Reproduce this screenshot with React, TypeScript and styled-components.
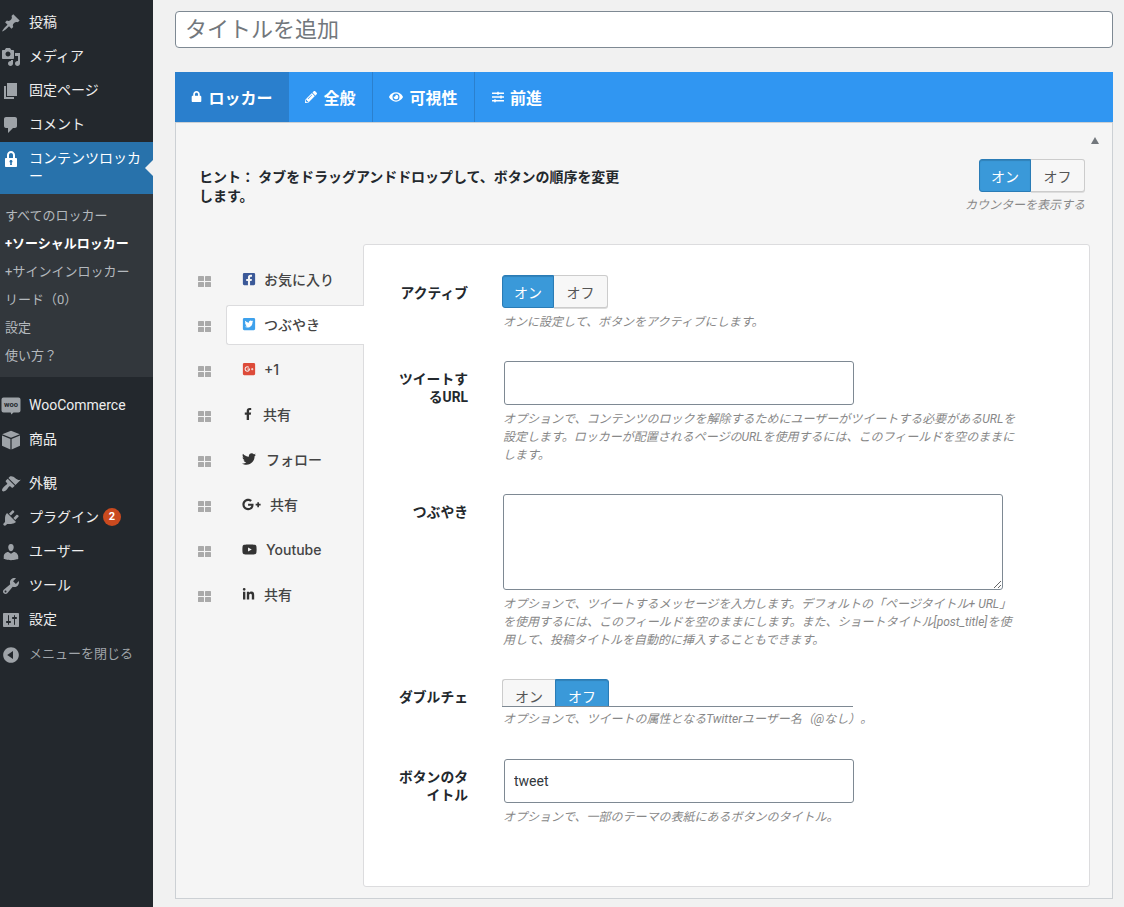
import React from "react";
import styled, { createGlobalStyle } from "styled-components";
import {
  FaFacebookSquare,
  FaTwitterSquare,
  FaGooglePlusSquare,
  FaFacebookF,
  FaTwitter,
  FaGooglePlusG,
  FaYoutube,
  FaLinkedinIn,
  FaLock,
  FaPencilAlt,
  FaEye,
  FaSlidersH,
} from "react-icons/fa";

const FONT = `Roboto, "Noto Sans CJK JP", "Noto Sans", sans-serif`;

const Global = createGlobalStyle`
  html, body { margin: 0; padding: 0; height: 907px; overflow: hidden; background: #f1f1f1; }
  body { font-family: ${FONT}; font-size: 13px; color: #444; text-spacing-trim: space-all; }
  * { box-sizing: border-box; }
`;

const Page = styled.div`
  display: flex;
  width: 1124px;
  height: 907px;
  overflow: hidden;
`;

const Sidebar = styled.nav`
  flex: 0 0 153px;
  background: #23282d;
  padding-top: 6px;
  display: flex;
  flex-direction: column;
`;

const MenuItem = styled.div<{ $active?: boolean; $muted?: boolean; $gapAfter?: number }>`
  position: relative;
  display: flex;
  align-items: flex-start;
  padding: ${(p) => (p.$active ? "7px 9px 9px 1px" : "7px 4px 7px 1px")};
  min-height: 34px;
  margin-bottom: ${(p) => p.$gapAfter ?? 0}px;
  background: ${(p) => (p.$active ? "#2872ab" : "transparent")};
  color: ${(p) => (p.$active ? "#fff" : p.$muted ? "#a0a5aa" : "#eee")};
  font-size: ${(p) => (p.$muted ? 13 : 14)}px;
  line-height: 18px;
`;

const MenuGlyph = styled.span<{ $active?: boolean }>`
  flex: 0 0 20px;
  width: 20px;
  height: 20px;
  color: ${(p) => (p.$active ? "#fff" : "#9ea3a8")};
  display: flex;
  align-items: center;
  justify-content: center;
`;

const MenuLabel = styled.span`
  margin-left: 8px;
  flex: 1;
  min-width: 0;
`;

const ActiveArrow = styled.span`
  position: absolute;
  right: 0;
  top: 18px;
  width: 0;
  height: 0;
  border-style: solid;
  border-width: 8px 8px 8px 0;
  border-color: transparent #f1f1f1 transparent transparent;
`;

const Badge = styled.span`
  display: inline-block;
  width: 18px;
  height: 18px;
  margin-left: 4px;
  border-radius: 50%;
  background: #ca4a1f;
  color: #fff;
  font-size: 11px;
  font-weight: 700;
  line-height: 18px;
  text-align: center;
  vertical-align: top;
`;

const Submenu = styled.div`
  background: #32373c;
  padding: 8px 0 7px 5px;
  margin-bottom: 12px;
`;

const SubItem = styled.div<{ $current?: boolean }>`
  height: 28px;
  line-height: 28px;
  font-size: 13px;
  white-space: nowrap;
  color: ${(p) => (p.$current ? "#fff" : "#b4b9be")};
  font-weight: ${(p) => (p.$current ? 700 : 400)};
`;

const Main = styled.main`
  flex: 1;
  min-width: 0;
  padding: 11px 11px 0 22px;
`;

const TitleInput = styled.input`
  display: block;
  width: 100%;
  height: 37px;
  padding: 0 9px;
  border: 1px solid #7e8993;
  border-radius: 4px;
  background: #fff;
  font-family: ${FONT};
  font-size: 22px;
  color: #32373c;
  outline: none;
  &::placeholder { color: #72777c; opacity: 1; }
`;

const TabBar = styled.div`
  margin-top: 24px;
  height: 50px;
  display: flex;
  background: #3096f2;
`;

const TabButton = styled.div<{ $active?: boolean; $divider?: boolean; $w: number }>`
  flex: 0 0 ${(p) => p.$w}px;
  display: flex;
  align-items: center;
  justify-content: center;
  gap: 6px;
  padding-bottom: 1px;
  background: ${(p) => (p.$active ? "#2a7fcd" : "transparent")};
  border-right: ${(p) => (p.$divider ? "1px solid #2b80ce" : "none")};
  color: #fff;
  font-size: 16px;
  font-weight: 700;
  white-space: nowrap;
`;

const PanelBody = styled.section`
  position: relative;
  border: 1px solid #ccd0d4;
  background: #f5f5f5;
  padding-bottom: 11px;
`;

const CollapseArrow = styled.span`
  position: absolute;
  top: 14px;
  right: 13px;
  width: 0;
  height: 0;
  border-style: solid;
  border-width: 0 4.5px 7px 4.5px;
  border-color: transparent transparent #72777c transparent;
`;

const HintRow = styled.div`
  height: 121px;
  padding: 36px 27px 0 23px;
  display: flex;
  justify-content: space-between;
  align-items: flex-start;
`;

const HintText = styled.p`
  margin: 9px 0 0;
  width: 428px;
  font-size: 14px;
  font-weight: 700;
  letter-spacing: -0.05px;
  line-height: 19px;
  color: #23282d;
`;

const CounterBox = styled.div`
  display: flex;
  flex-direction: column;
  align-items: flex-end;
`;

const CounterCaption = styled.div`
  margin-top: 5px;
  font-size: 12px;
  line-height: 16px;
  font-style: italic;
  color: #888;
`;

const ToggleGroup = styled.div`
  display: inline-flex;
`;

const ToggleBtn = styled.span<{ $on?: boolean; $side: "l" | "r"; $h: number }>`
  width: ${(p) => (p.$side === "l" ? (p.$on ? 52 : 53) : 54)}px;
  height: ${(p) => p.$h}px;
  display: flex;
  align-items: center;
  justify-content: center;
  font-size: 14px;
  background: ${(p) => (p.$on ? "#3a99d9" : "#f7f7f7")};
  color: ${(p) => (p.$on ? "#fff" : "#555")};
  border: 1px solid ${(p) => (p.$on ? "#2a7cb6" : "#ccc")};
  border-left-width: ${(p) => (p.$side === "r" && !p.$on ? 0 : 1)}px;
  border-right-width: ${(p) => (p.$side === "l" && !p.$on ? 0 : 1)}px;
  border-radius: ${(p) => (p.$side === "l" ? "3px 0 0 3px" : "0 3px 3px 0")};
  box-shadow: ${(p) => (p.$on ? "inset 0 1px 1px rgba(0,0,0,.15)" : "0 1px 0 #ddd")};
`;

const ClippedToggle = styled.div`
  width: 351px;
  height: 28px;
  margin-bottom: -2px;
  overflow: hidden;
  border-bottom: 1px solid #7e8993;
`;

const Columns = styled.div`
  display: flex;
  margin-right: 22px;
`;

const SocialList = styled.div`
  flex: 0 0 187px;
  padding-top: 14px;
`;

const SocialRow = styled.div`
  height: 45px;
  display: flex;
  align-items: center;
  padding-left: 22px;
`;

const DragHandle = styled.svg`
  flex: 0 0 13px;
  width: 13px;
  height: 11px;
  margin-top: 2px;
  fill: #aaa;
`;

const SocialTab = styled.div<{ $active?: boolean; $gap: number }>`
  position: relative;
  z-index: 1;
  margin: -2px ${(p) => (p.$active ? "-1px" : "0")} 0 15px;
  flex: 1;
  height: 40px;
  display: flex;
  align-items: center;
  gap: ${(p) => p.$gap}px;
  padding: 0 0 1px 15px;
  border: 1px solid ${(p) => (p.$active ? "#dcdcde" : "transparent")};
  border-right: none;
  border-radius: 3px 0 0 3px;
  background: ${(p) => (p.$active ? "#fff" : "transparent")};
  font-family: Inter, "Noto Sans CJK JP", sans-serif;
  font-size: 14px;
  font-weight: 500;
  color: #444;
  white-space: nowrap;
`;

const FormPanel = styled.div`
  flex: 1;
  min-width: 0;
  height: 643px;
  padding: 30px 0 0 34px;
  background: #fff;
  border: 1px solid #dcdcde;
  border-radius: 3px;
`;

const Field = styled.div<{ $gap?: number }>`
  display: grid;
  grid-template-columns: 70px 1fr;
  column-gap: 34px;
  margin-bottom: ${(p) => p.$gap ?? 30}px;
`;

const FieldLabel = styled.label`
  padding-top: 9px;
  font-size: 13.8px;
  font-weight: 700;
  line-height: 18px;
  text-align: right;
  color: #23282d;
`;

const FieldControl = styled.div`
  min-width: 0;
`;

const TextInput = styled.input`
  display: block;
  margin-left: 2px;
  width: 350px;
  height: 44px;
  padding: 0 9px;
  border: 1px solid #7e8993;
  border-radius: 3px;
  background: #fff;
  font-family: ${FONT};
  font-size: 14px;
  color: #32373c;
  outline: none;
`;

const TextArea = styled.textarea`
  display: block;
  margin-left: 1px;
  width: 500px;
  height: 96px;
  padding: 6px 9px;
  border: 1px solid #7e8993;
  border-radius: 3px;
  background: #fff;
  font-family: ${FONT};
  outline: none;
  resize: vertical;
`;

const Help = styled.p`
  margin: 5px 0 0 1px;
  width: 519px;
  font-size: 12px;
  font-style: italic;
  line-height: 18px;
  color: #888;
`;

const WP: Record<string, string> = {
  pin: "M10.44 3.02l1.82-1.82 6.36 6.35-1.83 1.82c-1.05-.68-2.48-.57-3.41.36l-.75.75c-.92.93-1.04 2.35-.35 3.41l-1.83 1.82-2.41-2.41-2.8 2.79c-.42.42-3.38 2.71-3.8 2.29s1.86-3.39 2.28-3.81l2.79-2.79L4.1 9.36l1.83-1.82c1.05.69 2.48.57 3.4-.36l.75-.75c.93-.92 1.05-2.35.36-3.41z",
  media: "M13 11V4c0-.55-.45-1-1-1h-1.67L9 1H5L3.67 3H2c-.55 0-1 .45-1 1v7c0 .55.45 1 1 1h10c.55 0 1-.45 1-1zM7 4.5c1.38 0 2.5 1.12 2.5 2.5S8.38 9.5 7 9.5 4.5 8.38 4.5 7 5.62 4.5 7 4.5zM14 6h5v10.5c0 1.38-1.12 2.5-2.5 2.5S14 17.88 14 16.5s1.12-2.5 2.5-2.5c.17 0 .34.02.5.05V9h-3V6zm-4 8.05V13h2v3.5c0 1.38-1.12 2.5-2.5 2.5S7 17.88 7 16.5 8.12 14 9.5 14c.17 0 .34.02.5.05z",
  page: "M6 15V2h10v13H6zm-1 1h8v2H3V5h2v11z",
  comment: "M5 2h9c1.1 0 2 .9 2 2v7c0 1.1-.9 2-2 2h-2l-5 5v-5H5c-1.1 0-2-.9-2-2V4c0-1.1.9-2 2-2z",
  lock: "M14 9h1c.55 0 1 .45 1 1v7c0 .55-.45 1-1 1H5c-.55 0-1-.45-1-1v-7c0-.55.45-1 1-1h1V6c0-2.2 1.8-4 4-4s4 1.8 4 4v3zm-2 0V6c0-1.1-.9-2-2-2s-2 .9-2 2v3h4zm-1 7l-.36-2.15c.51-.24.86-.75.86-1.35 0-.83-.67-1.5-1.5-1.5s-1.5.67-1.5 1.5c0 .6.35 1.11.86 1.35L9 16h2z",
  cube: "M10 .8l8.8 3.4L10 7.8 1.2 4.2 10 .8zM1 5.6l8.4 3.4V19.4L1 15.8V5.6zm18 0v10.2l-8.4 3.6V9L19 5.6z",
  brush: "M14.48 11.06L7.41 3.99l1.5-1.5c.5-.56 2.3-.47 3.51.32 1.21.8 1.43 1.28 2.91 2.1 1.18.64 2.45 1.26 4.45.85zm-.71.71L6.7 4.7 4.93 6.47c-.39.39-.39 1.02 0 1.41l1.06 1.06c.39.39.39 1.03 0 1.42-.6.6-1.43 1.11-2.21 1.69-.35.26-.7.53-1.01.84C1.43 14.23.4 16.08 1.4 17.07c.99 1 2.84-.03 4.18-1.36.31-.31.58-.66.85-1.02.57-.78 1.08-1.61 1.69-2.21.39-.39 1.02-.39 1.41 0l1.06 1.06c.39.39 1.02.39 1.41 0z",
  plug: "M13.11 4.36L9.87 7.6 8 5.73l3.24-3.24c.35-.34 1.05-.2 1.56.32.52.51.66 1.21.31 1.55zm-8 1.77l.91-1.12 9.01 9.01-1.19.84c-.71.71-2.63 1.16-3.82 1.16H6.14L4.9 17.26c-.59.59-1.54.59-2.12 0-.59-.58-.59-1.53 0-2.12l1.24-1.24v-3.88c0-1.13.4-3.19 1.09-3.89zm7.26 3.97l3.24-3.24c.34-.35 1.04-.21 1.55.31.52.51.66 1.21.31 1.55l-3.24 3.25z",
  user: "M10 9.25c-2.27 0-2.73-3.44-2.73-3.44C7 4.02 7.82 2 9.97 2c2.16 0 2.98 2.02 2.71 3.81 0 0-.41 3.44-2.68 3.44zm0 2.57L12.72 10c2.39 0 4.52 2.33 4.52 4.53v2.49s-3.65 1.13-7.24 1.13c-3.65 0-7.24-1.13-7.24-1.13v-2.49c0-2.25 1.94-4.48 4.47-4.48z",
  tool: "M16.68 9.77c-1.34 1.34-3.3 1.67-4.95.99l-5.41 6.52c-.99.99-2.59.99-3.58 0s-.99-2.59 0-3.57l6.52-5.42c-.68-1.65-.35-3.61.99-4.95 1.28-1.28 3.12-1.62 4.72-1.06l-2.89 2.89 2.82 2.82 2.86-2.87c.53 1.58.18 3.39-1.08 4.65zM3.81 16.21c.4.39 1.04.39 1.43 0 .4-.4.4-1.04 0-1.43-.39-.4-1.03-.4-1.43 0-.39.39-.39 1.03 0 1.43z",
  settings: "M18 16V4c0-.55-.45-1-1-1H3c-.55 0-1 .45-1 1v12c0 .55.45 1 1 1h14c.55 0 1-.45 1-1zM8 11h1c.55 0 1 .45 1 1s-.45 1-1 1H8v1.5c0 .28-.22.5-.5.5s-.5-.22-.5-.5V13H6c-.55 0-1-.45-1-1s.45-1 1-1h1V5.5c0-.28.22-.5.5-.5s.5.22.5.5V11zm5-2h-1c-.55 0-1-.45-1-1s.45-1 1-1h1V5.5c0-.28.22-.5.5-.5s.5.22.5.5V7h1c.55 0 1 .45 1 1s-.45 1-1 1h-1v5.5c0 .28-.22.5-.5.5s-.5-.22-.5-.5V9z",
  collapse: "M10 2.16c4.33 0 7.84 3.51 7.84 7.84s-3.51 7.84-7.84 7.84S2.16 14.33 2.16 10 5.71 2.16 10 2.16zm2 11.72V6.12L6.18 9.97z",
};

const WpIcon = ({ name }: { name: string }) => (
  <svg width="20" height="20" viewBox="0 0 20 20" fill="currentColor" aria-hidden>
    <path d={WP[name]} />
  </svg>
);

const WooIcon = () => (
  <svg width="20" height="20" viewBox="0 0 20 20" aria-hidden>
    <path d="M2.5 1.5h15a2 2 0 0 1 2 2v11a2 2 0 0 1-2 2h-5l-2.2 2-.6-2H2.5a2 2 0 0 1-2-2v-11a2 2 0 0 1 2-2z" fill="currentColor" />
    <text x="10" y="11.4" textAnchor="middle" fontFamily="Roboto, sans-serif" fontWeight="700" fontSize="7.5" fill="#23282d">woo</text>
  </svg>
);

const Handle = () => (
  <DragHandle viewBox="0 0 13 11" aria-hidden>
    <rect x="0" y="0" width="6" height="5" rx="0.6" />
    <rect x="7" y="0" width="6" height="5" rx="0.6" />
    <rect x="0" y="6" width="6" height="5" rx="0.6" />
    <rect x="7" y="6" width="6" height="5" rx="0.6" />
  </DragHandle>
);

const Toggle = ({ on, h = 33 }: { on: boolean; h?: number }) => (
  <ToggleGroup>
    <ToggleBtn $side="l" $on={on} $h={h}>オン</ToggleBtn>
    <ToggleBtn $side="r" $on={!on} $h={h}>オフ</ToggleBtn>
  </ToggleGroup>
);

const topItems = [
  { icon: "pin", label: "投稿" },
  { icon: "media", label: "メディア" },
  { icon: "page", label: "固定ページ" },
  { icon: "comment", label: "コメント" },
];

const subItems = ["すべてのロッカー", "+ソーシャルロッカー", "+サインインロッカー", "リード（0）", "設定", "使い方？"];

const socials = [
  { icon: <FaFacebookSquare size={14} color="#3b5998" />, label: "お気に入り", gap: 8 },
  { icon: <FaTwitterSquare size={14} color="#3ea1ec" />, label: "つぶやき", gap: 8, active: true },
  { icon: <FaGooglePlusSquare size={14} color="#dd4b39" />, label: "+1", gap: 8 },
  { icon: <FaFacebookF size={12} color="#333" />, label: "共有", gap: 9 },
  { icon: <FaTwitter size={14} color="#333" />, label: "フォロー", gap: 10 },
  { icon: <FaGooglePlusG size={19} color="#333" />, label: "共有", gap: 9 },
  { icon: <FaYoutube size={15} color="#333" />, label: "Youtube", gap: 9 },
  { icon: <FaLinkedinIn size={13} color="#333" />, label: "共有", gap: 9 },
];

export default function App() {
  return (
    <Page>
      <Global />
      <Sidebar>
        {topItems.map((m) => (
          <MenuItem key={m.label}>
            <MenuGlyph><WpIcon name={m.icon} /></MenuGlyph>
            <MenuLabel>{m.label}</MenuLabel>
          </MenuItem>
        ))}
        <MenuItem $active>
          <MenuGlyph $active><WpIcon name="lock" /></MenuGlyph>
          <MenuLabel>コンテンツロッカー</MenuLabel>
          <ActiveArrow />
        </MenuItem>
        <Submenu>
          {subItems.map((s, i) => (
            <SubItem key={s} $current={i === 1}>{s}</SubItem>
          ))}
        </Submenu>
        <MenuItem>
          <MenuGlyph><WooIcon /></MenuGlyph>
          <MenuLabel>WooCommerce</MenuLabel>
        </MenuItem>
        <MenuItem $gapAfter={10}>
          <MenuGlyph><WpIcon name="cube" /></MenuGlyph>
          <MenuLabel>商品</MenuLabel>
        </MenuItem>
        <MenuItem>
          <MenuGlyph><WpIcon name="brush" /></MenuGlyph>
          <MenuLabel>外観</MenuLabel>
        </MenuItem>
        <MenuItem>
          <MenuGlyph><WpIcon name="plug" /></MenuGlyph>
          <MenuLabel>プラグイン<Badge>2</Badge></MenuLabel>
        </MenuItem>
        <MenuItem>
          <MenuGlyph><WpIcon name="user" /></MenuGlyph>
          <MenuLabel>ユーザー</MenuLabel>
        </MenuItem>
        <MenuItem>
          <MenuGlyph><WpIcon name="tool" /></MenuGlyph>
          <MenuLabel>ツール</MenuLabel>
        </MenuItem>
        <MenuItem $gapAfter={1}>
          <MenuGlyph><WpIcon name="settings" /></MenuGlyph>
          <MenuLabel>設定</MenuLabel>
        </MenuItem>
        <MenuItem $muted>
          <MenuGlyph><WpIcon name="collapse" /></MenuGlyph>
          <MenuLabel>メニューを閉じる</MenuLabel>
        </MenuItem>
      </Sidebar>

      <Main>
        <TitleInput placeholder="タイトルを追加" />
        <TabBar>
          <TabButton $active $w={114}><FaLock size={11} />ロッカー</TabButton>
          <TabButton $divider $w={84}><FaPencilAlt size={12} />全般</TabButton>
          <TabButton $divider $w={102}><FaEye size={14} />可視性</TabButton>
          <TabButton $w={84}><FaSlidersH size={12} />前進</TabButton>
        </TabBar>
        <PanelBody>
          <CollapseArrow />
          <HintRow>
            <HintText>ヒント： タブをドラッグアンドドロップして、ボタンの順序を変更します。</HintText>
            <CounterBox>
              <Toggle on h={33} />
              <CounterCaption>カウンターを表示する</CounterCaption>
            </CounterBox>
          </HintRow>
          <Columns>
            <SocialList>
              {socials.map((s, i) => (
                <SocialRow key={i}>
                  <Handle />
                  <SocialTab $active={s.active} $gap={s.gap}>
                    {s.icon}
                    <span>{s.label}</span>
                  </SocialTab>
                </SocialRow>
              ))}
            </SocialList>
            <FormPanel>
              <Field>
                <FieldLabel>アクティブ</FieldLabel>
                <FieldControl>
                  <Toggle on />
                  <Help>オンに設定して、ボタンをアクティブにします。</Help>
                </FieldControl>
              </Field>
              <Field>
                <FieldLabel>ツイートするURL</FieldLabel>
                <FieldControl>
                  <TextInput />
                  <Help>オプションで、コンテンツのロックを解除するためにユーザーがツイートする必要があるURLを設定します。ロッカーが配置されるページのURLを使用するには、このフィールドを空のままにします。</Help>
                </FieldControl>
              </Field>
              <Field>
                <FieldLabel>つぶやき</FieldLabel>
                <FieldControl>
                  <TextArea />
                  <Help>オプションで、ツイートするメッセージを入力します。デフォルトの「ページタイトル+ URL」を使用するには、このフィールドを空のままにします。また、ショートタイトル[post_title]を使用して、投稿タイトルを自動的に挿入することもできます。</Help>
                </FieldControl>
              </Field>
              <Field $gap={31}>
                <FieldLabel>ダブルチェ</FieldLabel>
                <FieldControl>
                  <ClippedToggle><Toggle on={false} /></ClippedToggle>
                  <Help>オプションで、ツイートの属性となるTwitterユーザー名（@なし）。</Help>
                </FieldControl>
              </Field>
              <Field>
                <FieldLabel>ボタンのタイトル</FieldLabel>
                <FieldControl>
                  <TextInput defaultValue="tweet" />
                  <Help>オプションで、一部のテーマの表紙にあるボタンのタイトル。</Help>
                </FieldControl>
              </Field>
            </FormPanel>
          </Columns>
        </PanelBody>
      </Main>
    </Page>
  );
}
